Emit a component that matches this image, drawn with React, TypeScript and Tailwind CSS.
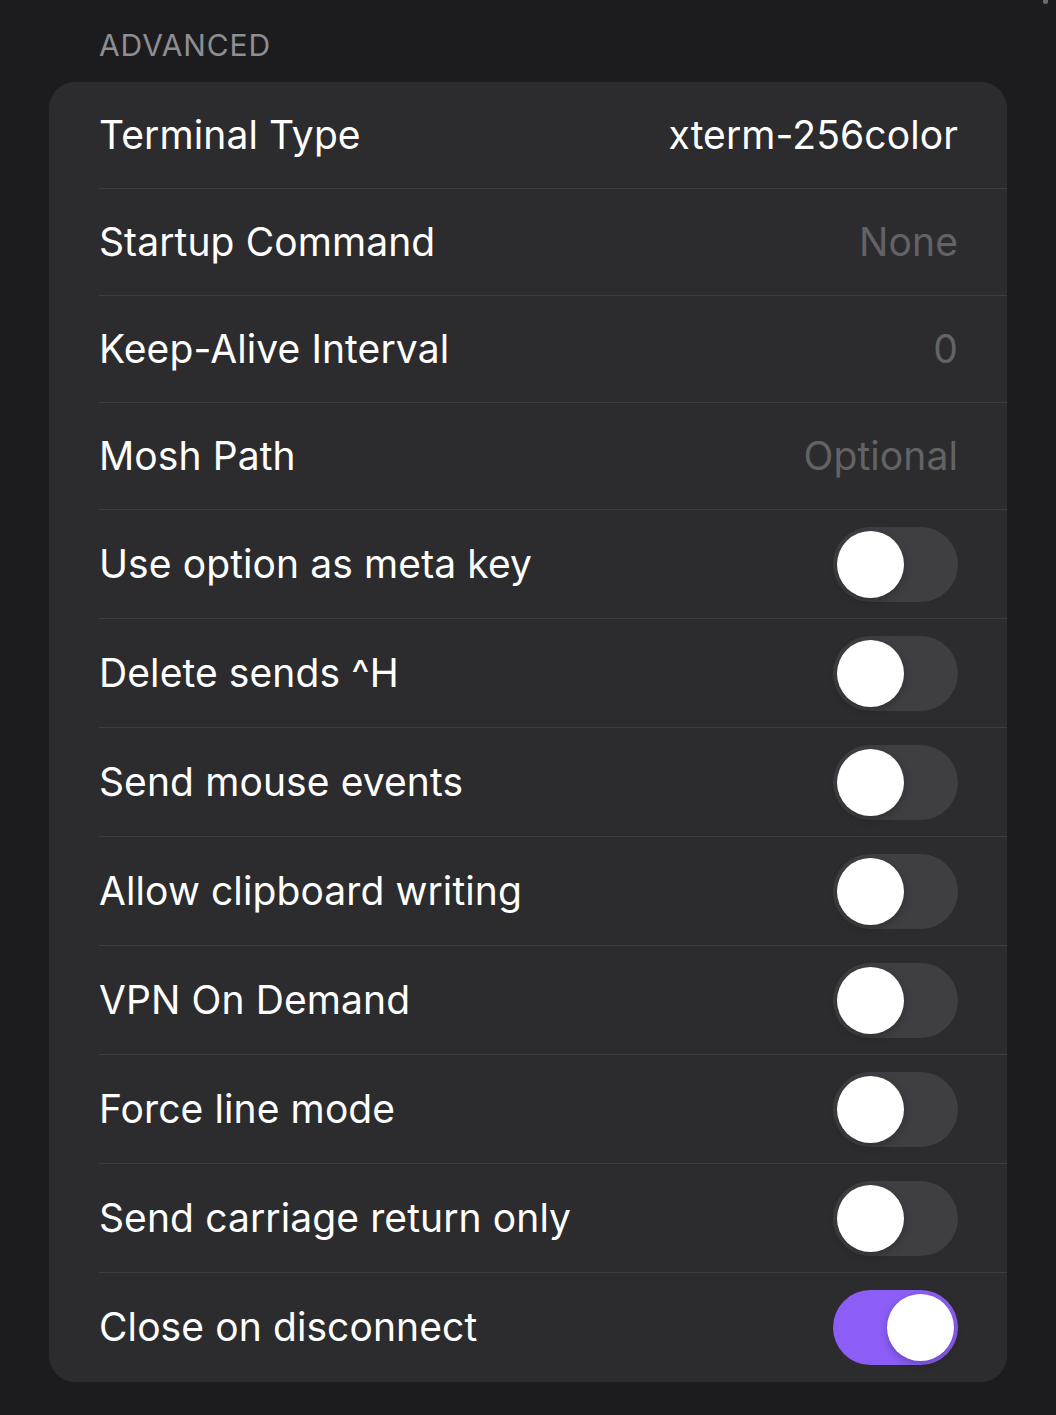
import React from "react";

type Row =
  | { label: string; kind: "value"; value: string; muted?: boolean }
  | { label: string; kind: "toggle"; on: boolean };

const rows: Row[] = [
  { label: "Terminal Type", kind: "value", value: "xterm-256color" },
  { label: "Startup Command", kind: "value", value: "None", muted: true },
  { label: "Keep-Alive Interval", kind: "value", value: "0", muted: true },
  { label: "Mosh Path", kind: "value", value: "Optional", muted: true },
  { label: "Use option as meta key", kind: "toggle", on: false },
  { label: "Delete sends ^H", kind: "toggle", on: false },
  { label: "Send mouse events", kind: "toggle", on: false },
  { label: "Allow clipboard writing", kind: "toggle", on: false },
  { label: "VPN On Demand", kind: "toggle", on: false },
  { label: "Force line mode", kind: "toggle", on: false },
  { label: "Send carriage return only", kind: "toggle", on: false },
  { label: "Close on disconnect", kind: "toggle", on: true },
];

const Toggle: React.FC<{ on: boolean }> = ({ on }) => {
  return (
    <div
      className={
        on
          ? "flex h-[75px] w-[125px] items-center justify-end rounded-full bg-[#8c5ef7] px-[4px]"
          : "flex h-[75px] w-[125px] items-center justify-start rounded-full bg-[#3f3f43] px-[4px]"
      }
    >
      <div className="h-[67px] w-[67px] rounded-full bg-white shadow-[0_3px_8px_rgba(0,0,0,0.25)]" />
    </div>
  );
};

export default function App() {
  return (
    <div
      className="relative min-h-screen w-full bg-[#1c1c1e] px-[49px] pb-[35px]"
      style={{ fontFamily: "Inter, 'Noto Sans', 'Liberation Sans', sans-serif" }}
    >
      <div className="absolute right-[8px] top-0 h-[4px] w-[5px] rounded-b-full bg-[#6b6b6f]" />
      <div className="pt-[30px] pl-[50px] text-[30px] leading-none tracking-[0.9px] text-[#8e8e93]">
        ADVANCED
      </div>
      <div className="mt-[22px] overflow-hidden rounded-[26px] bg-[#2c2c2e]">
        {rows.map((row, index) => {
          const last = index === rows.length - 1;
          return (
            <div key={row.label} className="pl-[50px]">
              <div
                className={
                  (row.kind === "value" ? "h-[107px] " : "h-[109px] ") +
                  (last ? "" : "border-b border-[#3d3d41] ") +
                  "flex items-center justify-between pr-[49px]"
                }
              >
                <span className="text-[39px] tracking-[0.1px] text-white">{row.label}</span>
                {row.kind === "value" ? (
                  <span
                    className={
                      row.muted
                        ? "text-[39px] tracking-[0.1px] text-[#636366]"
                        : "text-[39px] tracking-[0.1px] text-white"
                    }
                  >
                    {row.value}
                  </span>
                ) : (
                  <Toggle on={row.on} />
                )}
              </div>
            </div>
          );
        })}
      </div>
    </div>
  );
}
